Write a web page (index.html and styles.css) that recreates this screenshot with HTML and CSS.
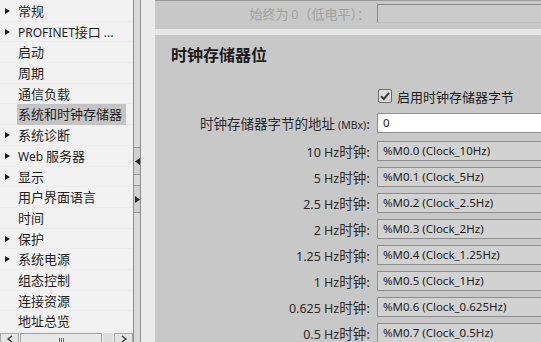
FILE: index.html
```html
<!DOCTYPE html>
<html lang="zh-CN">
<head>
<meta charset="UTF-8">
<title>时钟存储器位</title>
<link rel="stylesheet" href="styles.css">
</head>
<body>
<div class="app">
<div class="tree">
<ul class="tree-list">
<li class="has-kids">常规</li>
<li class="has-kids"><span class="latin">PROFINET</span>接口 <span class="latin">...</span></li>
<li>启动</li>
<li>周期</li>
<li>通信负载</li>
<li class="selected"><span>系统和时钟存储器</span></li>
<li class="has-kids">系统诊断</li>
<li class="has-kids"><span class="latin">Web</span> 服务器</li>
<li class="has-kids">显示</li>
<li>用户界面语言</li>
<li>时间</li>
<li class="has-kids">保护</li>
<li class="has-kids">系统电源</li>
<li>组态控制</li>
<li>连接资源</li>
<li>地址总览</li>
</ul>
<div class="hscroll">
<div class="hs-btn">
<svg width="8" height="8" viewBox="0 0 8 8"><path d="M6 1 L2 4 L6 7" fill="none" stroke="#333" stroke-width="1.3"/></svg>
</div>
<div class="hs-thumb"><span class="grip"></span></div>
<div class="hs-track"></div>
<div class="hs-btn">
<svg width="8" height="8" viewBox="0 0 8 8"><path d="M2 1 L6 4 L2 7" fill="none" stroke="#333" stroke-width="1.3"/></svg>
</div>
</div>
</div>

<div class="splitter">
<div class="split-btn">
<svg width="5" height="7" viewBox="0 0 5 7"><path d="M5 0 L0 3.5 L5 7 Z" fill="#222"/></svg>
</div>
<div class="split-btn">
<svg width="5" height="7" viewBox="0 0 5 7"><path d="M0 0 L5 3.5 L0 7 Z" fill="#222"/></svg>
</div>
</div>

<div class="gutter"></div>

<div class="editor">
<div class="section section-top">
<div class="field-row">
<label class="field-label disabled">始终为 <span class="latin">0</span>（低电平）：</label>
<div class="field-input disabled-box"></div>
</div>
</div>

<div class="section section-clock">
<h2>时钟存储器位</h2>
<div class="field-row check-row">
<span></span>
<label class="check">
<svg class="check-box" width="14" height="14" viewBox="0 0 14 14">
<rect x="0.5" y="0.5" width="13" height="13" rx="1.5" fill="#dcdcdc" stroke="#6e6e6e"/>
<path d="M3 7.2 L5.8 10 L11 3.8" fill="none" stroke="#3a3a3a" stroke-width="2"/>
</svg>
启用时钟存储器字节
</label>
</div>
<div class="field-row addr-row">
<label class="field-label">时钟存储器字节的地址 <span class="small">(MBx)</span>:</label>
<div class="field-input editable">0</div>
</div>
<div class="field-row">
<label class="field-label"><span class="latin">10 Hz</span>时钟:</label>
<div class="field-input">%M0.0 (Clock_10Hz)</div>
</div>
<div class="field-row">
<label class="field-label"><span class="latin">5 Hz</span>时钟:</label>
<div class="field-input">%M0.1 (Clock_5Hz)</div>
</div>
<div class="field-row">
<label class="field-label"><span class="latin">2.5 Hz</span>时钟:</label>
<div class="field-input">%M0.2 (Clock_2.5Hz)</div>
</div>
<div class="field-row">
<label class="field-label"><span class="latin">2 Hz</span>时钟:</label>
<div class="field-input">%M0.3 (Clock_2Hz)</div>
</div>
<div class="field-row">
<label class="field-label"><span class="latin">1.25 Hz</span>时钟:</label>
<div class="field-input">%M0.4 (Clock_1.25Hz)</div>
</div>
<div class="field-row">
<label class="field-label"><span class="latin">1 Hz</span>时钟:</label>
<div class="field-input">%M0.5 (Clock_1Hz)</div>
</div>
<div class="field-row">
<label class="field-label"><span class="latin">0.625 Hz</span>时钟:</label>
<div class="field-input">%M0.6 (Clock_0.625Hz)</div>
</div>
<div class="field-row">
<label class="field-label"><span class="latin">0.5 Hz</span>时钟:</label>
<div class="field-input">%M0.7 (Clock_0.5Hz)</div>
</div>
</div>
</div>
</div>
</body>
</html>
```

FILE: styles.css
```css
body {
margin: 0;
font-family: "Noto Sans", "Noto Sans CJK SC", sans-serif;
font-size: 13px;
color: #1e1e1e;
background: #c8c8c8;
}

.app {
display: flex;
width: 541px;
height: 342px;
overflow: hidden;
}

/* left navigation tree */
.tree {
width: 133px;
flex-shrink: 0;
display: flex;
flex-direction: column;
background: #f2f2f2;
border-right: 1px solid #8e8e8e;
}

.tree-list {
list-style: none;
margin: 0;
padding: 1px 0 0;
flex: 1;
font-family: "Noto Sans CJK SC", sans-serif;
}

.tree-list li {
position: relative;
height: 20.7px;
line-height: 20.7px;
padding-left: 18px;
white-space: nowrap;
border-bottom: 1px solid #ececec;
box-sizing: border-box;
}

.tree-list .latin {
font-family: "Noto Sans", sans-serif;
font-size: 12px;
}

.tree-list li.has-kids::before {
content: "";
position: absolute;
left: 5px;
top: 7px;
border-style: solid;
border-width: 3.5px 0 3.5px 5px;
border-color: transparent transparent transparent #1a1a1a;
}

.tree-list li.selected span {
display: inline-block;
background: #c4c4c4;
padding: 0 4px 0 1px;
margin-left: -1px;
}

.hscroll {
height: 10px;
display: flex;
gap: 1px;
padding-top: 1px;
}

.hs-btn {
width: 19px;
height: 14px;
background: #e4e4e4;
border: 1px solid #a8a8a8;
display: flex;
justify-content: center;
padding-top: 1px;
box-sizing: border-box;
}

.hs-thumb {
width: 82px;
height: 14px;
background: #e8e8e8;
border: 1px solid #9c9c9c;
box-sizing: border-box;
display: flex;
justify-content: center;
}

.grip {
width: 5px;
height: 6px;
margin-top: 4px;
border-left: 1px solid #666;
border-right: 1px solid #666;
box-sizing: border-box;
background: linear-gradient(#666, #666) center / 1px 100% no-repeat;
}

.hs-track {
flex: 1;
background: #dcdcdc;
}

/* splitter between tree and editor */
.splitter {
width: 7px;
flex-shrink: 0;
background: #dadada;
border-right: 1px solid #8e8e8e;
display: flex;
flex-direction: column;
gap: 10px;
padding-top: 147px;
box-sizing: border-box;
}

.split-btn {
height: 26px;
background: #d0d0d0;
border-top: 1px solid #999;
border-bottom: 1px solid #999;
display: flex;
align-items: center;
justify-content: center;
}

.gutter {
width: 14px;
flex-shrink: 0;
background: #ebebeb;
}

/* editor area */
.editor {
flex: 1;
background: #e6e6e6;
display: flex;
flex-direction: column;
gap: 6px;
border-top: 1px solid #9a9a9a;
}

.section {
background: #c8c8c8;
}

.section-top {
height: 33px;
padding-top: 2px;
box-sizing: border-box;
}

.section-clock {
flex: 1;
padding-top: 9px;
}

h2 {
margin: 0 0 22px 16px;
font-family: "Noto Sans CJK SC", sans-serif;
font-size: 16px;
line-height: 20px;
font-weight: bold;
color: #1a1a1a;
}

.field-row {
display: grid;
grid-template-columns: 215px 200px;
column-gap: 7px;
align-items: center;
height: 20px;
margin-bottom: 6px;
}

.check-row {
margin-bottom: 7px;
}

.field-label {
text-align: right;
white-space: nowrap;
font-family: "Noto Sans CJK SC", sans-serif;
font-size: 13.5px;
color: #2a2a2a;
}

.field-label .latin {
font-family: "Noto Sans", sans-serif;
font-size: 12.5px;
}

.field-label .small {
font-family: "Noto Sans", sans-serif;
font-size: 10.5px;
}

.field-label.disabled {
color: #a2a2a2;
font-size: 13px;
}

.field-input {
height: 20px;
line-height: 18px;
padding-left: 5px;
border: 1px solid #8e8e8e;
background: #d2d2d2;
box-sizing: border-box;
font-size: 11.5px;
color: #1e1e1e;
white-space: nowrap;
}

.field-input.editable {
background: #fff;
}

.disabled-box {
height: 19px;
border-color: #8a8a8a #bdbdbd #bdbdbd #8a8a8a;
background: #cacaca;
}

.addr-row {
margin-bottom: 8px;
}

.check {
display: flex;
align-items: center;
gap: 5px;
padding-left: 1px;
font-family: "Noto Sans CJK SC", sans-serif;
color: #1e1e1e;
}
```
